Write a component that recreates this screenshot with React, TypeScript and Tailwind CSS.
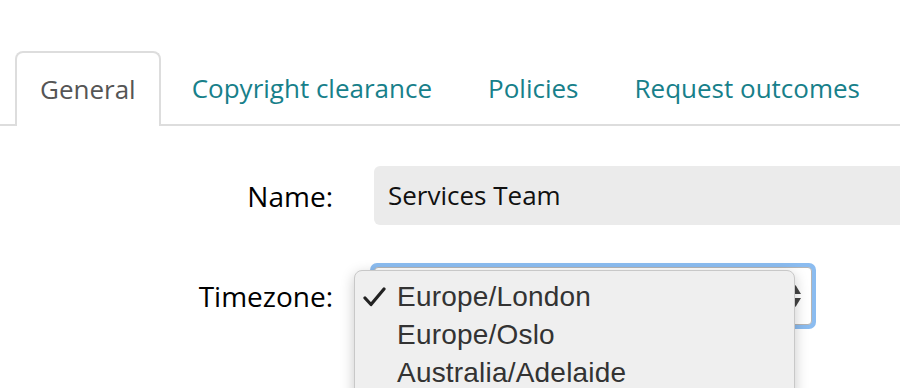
import React from "react";

const tabs = ["General", "Copyright clearance", "Policies", "Request outcomes"];
const zones = ["Europe/London", "Europe/Oslo", "Australia/Adelaide"];

const App = () => {
  return (
    <div className="w-[900px] h-[388px] overflow-hidden bg-white pt-[51px] font-['Open_Sans',sans-serif]">
      {/* tabs */}
      <div className="flex items-end border-b-2 border-[#dddddd] pl-[15px] h-[75px] whitespace-nowrap">
        {tabs.map((tab, i) =>
          i === 0 ? (
            <div
              key={tab}
              className="h-[75px] -mb-[2px] mr-[6px] flex items-center px-[23px] border-2 border-b-0 border-[#dddddd] rounded-t-[8px] bg-white text-[26px] text-[#555555]"
            >
              {tab}
            </div>
          ) : (
            <div
              key={tab}
              className="h-[75px] -mb-[2px] mr-[6px] flex items-center px-[23px] border-2 border-transparent text-[26px] text-[#17808a]"
            >
              {tab}
            </div>
          )
        )}
      </div>

      {/* form */}
      <div className="grid grid-cols-[333px_auto] gap-x-[41px] items-center mt-[40px] text-[26px] text-[#111111]">
        <div className="text-right text-[28px] text-black">Name:</div>
        <div className="w-[600px] h-[59px] rounded-[6px] bg-[#ebebeb] flex items-center pl-[14px]">
          Services Team
        </div>

        <div className="text-right text-[28px] text-black mt-[38px]">Timezone:</div>
        <div className="relative mt-[38px] -ml-[4px] w-[446px] h-[66px] rounded-[7px] bg-[#8bbcf0] p-[4px]">
          <div className="h-full rounded-[4px] bg-white border border-[#b5b5b5] flex items-center justify-end pr-[10px]">
            <svg width="11" height="23" viewBox="0 0 11 23">
              <path d="M5.5 0 L11 9 L0 9 Z" fill="#444444" />
              <path d="M0 13 L11 13 L5.5 22 Z" fill="#444444" />
            </svg>
          </div>

          {/* open dropdown menu */}
          <div className="absolute left-[-16px] top-[7px] w-[441px] h-[130px] rounded-[8px] bg-[#efefef] border border-[#c8c8c8] shadow-[0_4px_14px_rgba(0,0,0,0.22)] pt-[7px] font-['Liberation_Sans',sans-serif] text-[28px] text-[#333333]">
            {zones.map((z, i) => (
              <div key={z} className="h-[38px] flex items-center">
                <span className="w-[42px] pl-[8px] flex items-center">
                  {i === 0 && (
                    <svg width="23" height="20" viewBox="0 0 23 20">
                      <path d="M2 11 L8 17.5 L21 2" fill="none" stroke="#222222" strokeWidth="3.2" strokeLinecap="round" strokeLinejoin="round" />
                    </svg>
                  )}
                </span>
                <span className="tracking-[0.2px]">{z}</span>
              </div>
            ))}
          </div>
        </div>
      </div>
    </div>
  );
};

export default App;
